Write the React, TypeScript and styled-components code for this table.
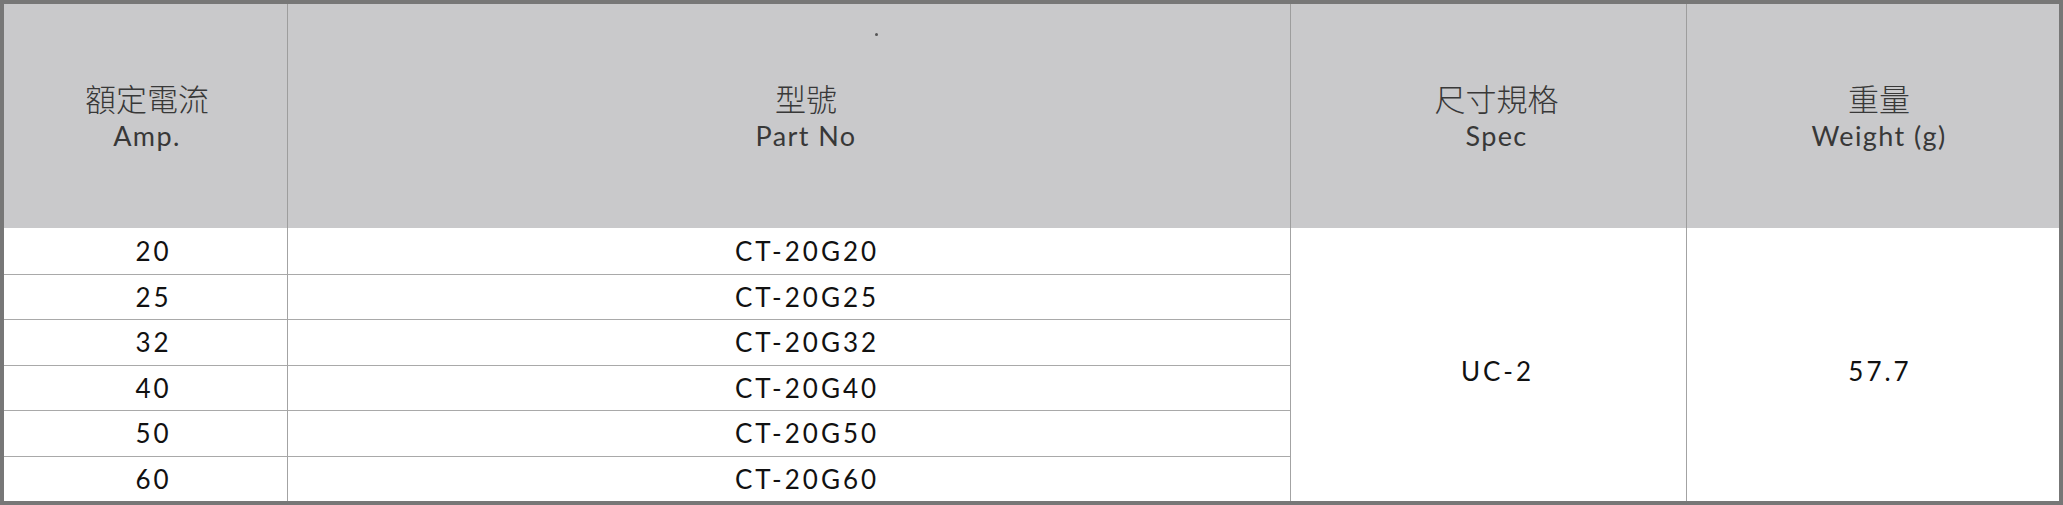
import styled, { createGlobalStyle } from "styled-components";

const GlobalStyle = createGlobalStyle`
  html, body {
    margin: 0;
    padding: 0;
    background: #ffffff;
  }
`;

const Frame = styled.div`
  width: 2063px;
  height: 505px;
  box-sizing: border-box;
  border: 4px solid #777777;
  display: grid;
  grid-template-columns: 283px 1003px 396px 373px;
  grid-template-rows: 224px repeat(6, 1fr);
  font-family: "Lato", "Noto Sans CJK TC", sans-serif;
  background: #ffffff;
`;

const HeadCell = styled.div<{ $divider?: boolean; $shift: number }>`
  position: relative;
  box-sizing: border-box;
  background: #c9c9cb;
  border-left: ${(p) => (p.$divider ? "1px solid #9d9d9d" : "none")};
  padding-left: ${(p) => p.$shift}px;
  display: flex;
  flex-direction: column;
  align-items: center;
  justify-content: center;
  color: #383838;
  padding-top: 2px;
`;

const HeadZh = styled.span`
  font-family: "Noto Sans CJK TC", sans-serif;
  font-size: 31px;
  font-weight: 300;
  line-height: 38px;
`;

const HeadEn = styled.span`
  font-size: 27px;
  font-weight: 400;
  line-height: 38px;
  letter-spacing: 1.4px;
`;

const Speck = styled.span`
  position: absolute;
  left: 587px;
  top: 29px;
  width: 3px;
  height: 3px;
  border-radius: 50%;
  background: #555555;
`;

const Cell = styled.div<{ $divider?: boolean; $line?: boolean; $shift: number }>`
  box-sizing: border-box;
  border-left: ${(p) => (p.$divider ? "1px solid #a3a3a3" : "none")};
  border-top: ${(p) => (p.$line ? "1px solid #a9a9a9" : "none")};
  padding-left: ${(p) => p.$shift}px;
  display: flex;
  align-items: center;
  justify-content: center;
  font-size: 26px;
  font-weight: 400;
  letter-spacing: 3px;
  color: #111111;
`;

const SpanCell = styled(Cell)`
  grid-row: 2 / span 6;
  padding-top: 12px;
`;

const rows = [
  { amp: "20", part: "CT-20G20" },
  { amp: "25", part: "CT-20G25" },
  { amp: "32", part: "CT-20G32" },
  { amp: "40", part: "CT-20G40" },
  { amp: "50", part: "CT-20G50" },
  { amp: "60", part: "CT-20G60" },
];

export default function App() {
  return (
    <>
      <GlobalStyle />
      <Frame>
        <HeadCell $shift={3}>
          <HeadZh>額定電流</HeadZh>
          <HeadEn>Amp.</HeadEn>
        </HeadCell>
        <HeadCell $divider $shift={34}>
          <Speck />
          <HeadZh>型號</HeadZh>
          <HeadEn>Part No</HeadEn>
        </HeadCell>
        <HeadCell $divider $shift={16}>
          <HeadZh>尺寸規格</HeadZh>
          <HeadEn>Spec</HeadEn>
        </HeadCell>
        <HeadCell $divider $shift={12}>
          <HeadZh>重量</HeadZh>
          <HeadEn>Weight (g)</HeadEn>
        </HeadCell>

        {rows.map((r, i) => [
          <Cell key={`a${i}`} $line={i > 0} $shift={16} style={{ gridRow: i + 2, gridColumn: 1 }}>
            {r.amp}
          </Cell>,
          <Cell key={`p${i}`} $line={i > 0} $divider $shift={36} style={{ gridRow: i + 2, gridColumn: 2 }}>
            {r.part}
          </Cell>,
        ])}

        <SpanCell $divider $shift={18} style={{ gridColumn: 3 }}>
          UC-2
        </SpanCell>
        <SpanCell $divider $shift={14} style={{ gridColumn: 4 }}>
          57.7
        </SpanCell>
      </Frame>
    </>
  );
}
